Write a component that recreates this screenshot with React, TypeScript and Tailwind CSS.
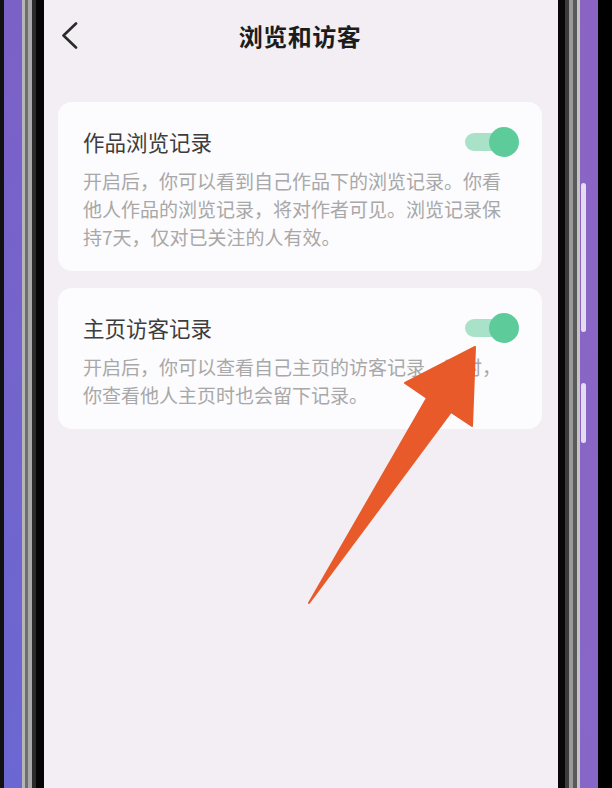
const font = { fontFamily: '"Noto Sans CJK SC", "Noto Sans", sans-serif' };

interface Setting {
  title: string;
  desc: string;
}

const settings: Setting[] = [
  {
    title: '作品浏览记录',
    desc: '开启后，你可以看到自己作品下的浏览记录。你看他人作品的浏览记录，将对作者可见。浏览记录保持7天，仅对已关注的人有效。',
  },
  {
    title: '主页访客记录',
    desc: '开启后，你可以查看自己主页的访客记录，同时，你查看他人主页时也会留下记录。',
  },
];

function BackIcon() {
  return (
    <svg width="17" height="27" viewBox="0 0 17 27" fill="none" className="absolute left-[3px] top-[22px]">
      <polyline
        points="15,1.5 2.5,13.5 15,25.5"
        stroke="#2b2b2b"
        strokeWidth="2.6"
        strokeLinecap="round"
        strokeLinejoin="round"
      />
    </svg>
  );
}

function Toggle() {
  return (
    <div className="relative w-[54px] h-[30px] flex items-center shrink-0">
      <div className="w-[42px] h-[18px] rounded-full bg-[#a9e2c9]" />
      <div className="absolute right-0 top-0 w-[30px] h-[30px] rounded-full bg-[#5ecb9b]" />
    </div>
  );
}

function SettingCard({ item }: { item: Setting }) {
  return (
    <div className="bg-[#fcfbfd] rounded-[14px] pl-[25px] pr-[23px] pt-[25px] pb-[20px]">
      <div className="flex items-center justify-between h-[30px]">
        <span className="text-[21.5px] text-[#3d3d3d]">{item.title}</span>
        <Toggle />
      </div>
      <p className="mt-[10px] pr-[14px] text-[19px] leading-[28px] text-[#a8a8a8]">{item.desc}</p>
    </div>
  );
}

function FrameEdge({ side }: { side: 'left' | 'right' }) {
  if (side === 'left') {
    return (
      <div className="flex w-[22px] shrink-0">
        <div className="w-[3px] bg-[#b5b5b5]" />
        <div className="w-[3px] bg-[#6e6e6e]" />
        <div className="w-[4px] bg-[#a8a8a8]" />
        <div className="w-[4px] bg-[#2a2a2a]" />
        <div className="w-[8px] bg-[#050505]" />
      </div>
    );
  }
  return (
    <div className="flex w-[22px] shrink-0">
      <div className="w-[7px] bg-[#080808]" />
      <div className="w-[4px] bg-[#3c3c3c]" />
      <div className="w-[4px] bg-[#9a9a9a]" />
      <div className="w-[4px] bg-[#5a5a5a]" />
      <div className="w-[3px] bg-[#c4c4c4]" />
    </div>
  );
}

export default function App() {
  return (
    <div className="relative flex w-[612px] h-[788px] overflow-hidden bg-black" style={font}>
      <div className="w-[4px] shrink-0 bg-[#111]" />
      <div className="w-[18px] shrink-0 bg-gradient-to-b from-[#7b61c7] to-[#6b67d2]" />
      <FrameEdge side="left" />

      {/* screen */}
      <div className="flex-1 bg-[#f2eef3] pl-[14px] pr-[16px]">
        <div className="relative h-[72px] flex items-center justify-center">
          <BackIcon />
          <h1 className="text-[24px] font-bold text-[#1c1c1c] tracking-[0.5px]">浏览和访客</h1>
        </div>
        <div className="mt-[30px] flex flex-col gap-[17px]">
          {settings.map((s) => (
            <SettingCard key={s.title} item={s} />
          ))}
        </div>
      </div>

      <FrameEdge side="right" />
      <div className="w-[18px] shrink-0 bg-gradient-to-b from-[#8b64c3] to-[#8667c7] flex flex-col">
        <div className="mt-[183px] ml-[1px] w-[5px] h-[149px] rounded-sm bg-[#e4dcef]" />
        <div className="mt-[51px] ml-[1px] w-[5px] h-[60px] rounded-sm bg-[#e4dcef]" />
      </div>
      <div className="w-[14px] shrink-0 bg-black" />

      {/* pointer arrow drawn over the page */}
      <svg className="absolute inset-0 pointer-events-none" width="612" height="788" viewBox="0 0 612 788">
        <polygon
          points="475,347 472,426 451,412 309,603 427,398 405,383"
          fill="#e85a29"
          stroke="#e85a29"
          strokeWidth="2"
          strokeLinejoin="round"
        />
      </svg>
    </div>
  );
}
